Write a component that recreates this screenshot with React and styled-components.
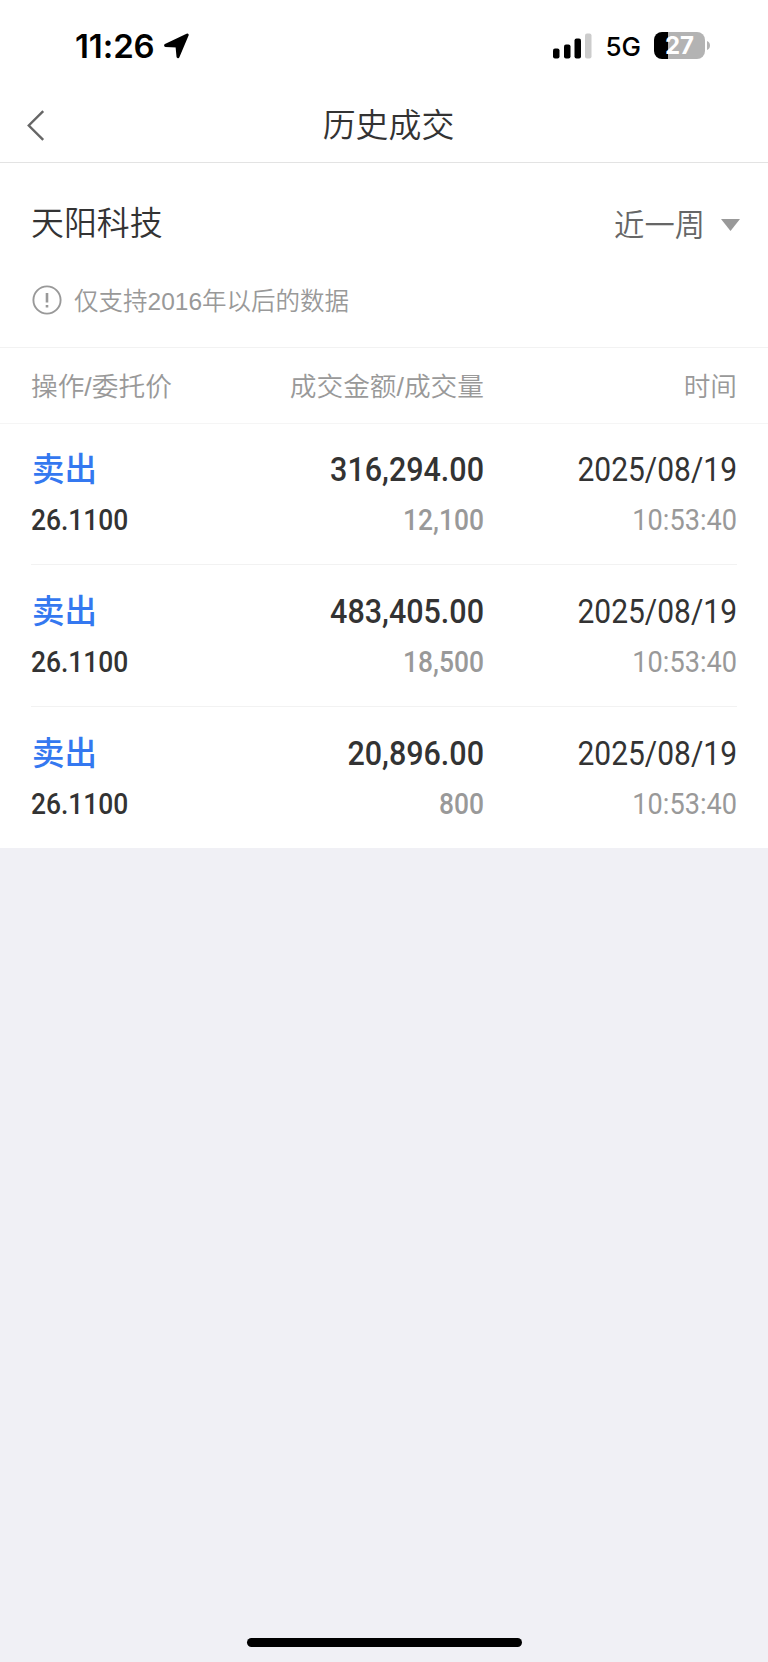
import styled, { createGlobalStyle } from 'styled-components';

const GlobalStyle = createGlobalStyle`
  * {
    box-sizing: border-box;
  }
  body {
    margin: 0;
    background-color: #f0f0f5;
    font-family: 'Liberation Sans', 'Noto Sans CJK SC', sans-serif;
    font-weight: 350;
    color: #333;
  }
`;

const Page = styled.div`
  display: flex;
  flex-direction: column;
  width: 768px;
  height: 1662px;
  background-color: #f0f0f5;
`;

const StatusBar = styled.div`
  display: flex;
  justify-content: space-between;
  height: 92px;
  padding: 0 58px 0 75px;
  background-color: #fff;
  color: #000;
  font-family: Inter, sans-serif;
`;

const StatusLeft = styled.div`
  display: flex;
  align-items: center;
  height: 92px;
  gap: 9px;
  font-size: 33px;
  font-weight: 600;
  letter-spacing: -0.1px;
`;

const StatusRight = styled.div`
  display: flex;
  align-items: center;
  height: 92px;
  font-size: 26px;
  font-weight: 500;
  .svg__signal {
    margin-right: 13px;
    margin-bottom: 1px;
  }
`;

const Battery = styled.div`
  display: flex;
  align-items: center;
  margin-left: 13px;
  padding-bottom: 1px;
  .div__battery-body {
    width: 51px;
    height: 27px;
    border-radius: 8px;
    background: linear-gradient(to right, #000 14px, #b3b3b3 14px);
    color: #fff;
    font-size: 24px;
    font-weight: 700;
    line-height: 27px;
    text-align: center;
  }
  .svg__battery-cap {
    margin-left: 2px;
  }
`;

const NavBar = styled.header`
  display: grid;
  grid-template-columns: 60px 1fr 51px;
  align-items: center;
  height: 71px;
  padding: 0 26px 3px;
  border-bottom: 1px solid #e3e3e3;
  background-color: #fff;
  h1 {
    margin: 0;
    font-size: 32.9px;
    font-weight: 350;
    line-height: 40px;
    text-align: center;
  }
`;

const StockRow = styled.div`
  display: flex;
  justify-content: space-between;
  height: 122px;
  padding: 0 28px 0 31px;
  background-color: #fff;
  h2 {
    margin: 0;
    font-size: 32.9px;
    font-weight: 350;
    line-height: 122px;
  }
`;

const PeriodPicker = styled.div`
  display: flex;
  align-items: center;
  height: 124px;
  gap: 16px;
  color: #666;
  font-size: 30.3px;
  span {
    padding-bottom: 4px;
  }
`;

const Notice = styled.div`
  display: flex;
  align-items: center;
  height: 62px;
  padding: 0 0 32px 32px;
  gap: 12px;
  background-color: #fff;
  color: #999;
  font-size: 24.5px;
  line-height: 30px;
  span {
    padding-top: 3px;
  }
`;

const TableHead = styled.div`
  display: grid;
  grid-template-columns: 200px 253px 253px;
  align-items: center;
  height: 77px;
  padding: 0 31px 3px;
  border-top: 1px solid #f2f2f2;
  border-bottom: 1px solid #f5f5f5;
  background-color: #fff;
  color: #999;
  font-size: 26.7px;
  span + span {
    text-align: right;
  }
`;

const List = styled.ul`
  margin: 0;
  padding: 0 31px;
  list-style: none;
  background-color: #fff;
`;

const Row = styled.li`
  display: grid;
  grid-template-columns: 200px 253px 253px;
  grid-template-rows: 50px 50px;
  height: 142px;
  padding-top: 22px;
  border-bottom: 1px solid #f2f2f2;
  &:first-child {
    height: 141px;
    padding-top: 21px;
  }
  &:last-child {
    height: 141px;
    border-bottom: none;
  }
`;

const Side = styled.div`
  padding-left: 1px;
  color: #3478f0;
  font-size: 32.5px;
  font-weight: 500;
  line-height: 51px;
`;

// narrow figures, squeezed towards the edge they are aligned to
const Figure = styled.div`
  color: ${({ $muted }) => ($muted ? '#999' : '#333')};
  font-family: Roboto, sans-serif;
  font-size: ${({ $small }) => ($small ? '29.5px' : '33.5px')};
  font-weight: ${({ $bold }) => ($bold ? 500 : 450)};
  line-height: ${({ $small }) => ($small ? '51px' : '50px')};
  text-align: ${({ $left }) => ($left ? 'left' : 'right')};
  transform: scaleX(${({ $scale }) => $scale || 0.895});
  transform-origin: ${({ $left }) => ($left ? 'left' : 'right')};
  white-space: nowrap;
`;

const HomeIndicator = styled.div`
  width: 275px;
  height: 9px;
  margin: auto auto 15px;
  border-radius: 5px;
  background-color: #000;
`;

const trades = [
  { amount: '316,294.00', volume: '12,100' },
  { amount: '483,405.00', volume: '18,500' },
  { amount: '20,896.00', volume: '800' },
];

export default function App() {
  return (
    <Page>
      <GlobalStyle />
      <StatusBar>
        <StatusLeft>
          <span>11:26</span>
          <svg width="26" height="26" viewBox="0 0 26 26">
            <path
              d="M1.6 12.4 23.2 2 14 23.6 13 13Z"
              fill="#000"
              stroke="#000"
              strokeWidth="3"
              strokeLinejoin="round"
            />
          </svg>
        </StatusLeft>
        <StatusRight>
          <svg className="svg__signal" width="39" height="26">
            <rect x="0" y="15.5" width="6.5" height="10" rx="2" />
            <rect x="11" y="11.5" width="6.5" height="14" rx="2" />
            <rect x="21.5" y="5.5" width="6.5" height="20" rx="2" />
            <rect x="32" y="0.5" width="6.5" height="25" rx="2" fill="#ccc" />
          </svg>
          <span>5G</span>
          <Battery>
            <div className="div__battery-body">27</div>
            <svg className="svg__battery-cap" width="3" height="9">
              <path d="M0 0C4 1.5 4 7.5 0 9Z" fill="#b3b3b3" />
            </svg>
          </Battery>
        </StatusRight>
      </StatusBar>
      <NavBar>
        <svg width="20" height="32" viewBox="0 0 20 32">
          <path
            d="M17.2 1.2 2.8 15.5 17.2 29.8"
            fill="none"
            stroke="#666"
            strokeWidth="2.4"
          />
        </svg>
        <h1>历史成交</h1>
      </NavBar>
      <StockRow>
        <h2>天阳科技</h2>
        <PeriodPicker>
          <span>近一周</span>
          <svg width="19" height="12">
            <path d="M0 0H19L9.5 12Z" fill="#999" />
          </svg>
        </PeriodPicker>
      </StockRow>
      <Notice>
        <svg width="30" height="30" viewBox="0 0 30 30">
          <circle cx="15" cy="15" r="13.6" fill="none" stroke="#999" strokeWidth="1.9" />
          <path d="M15 8V17.5M15 20V22.5" stroke="#999" strokeWidth="2.6" />
        </svg>
        <span>仅支持2016年以后的数据</span>
      </Notice>
      <TableHead>
        <span>操作/委托价</span>
        <span>成交金额/成交量</span>
        <span>时间</span>
      </TableHead>
      <List>
        {trades.map(({ amount, volume }) => (
          <Row key={amount}>
            <Side>卖出</Side>
            <Figure $bold $scale={0.91}>{amount}</Figure>
            <Figure>2025/08/19</Figure>
            <Figure $small $bold $left>26.1100</Figure>
            <Figure $small $bold $muted>{volume}</Figure>
            <Figure $small $muted $scale={0.92}>10:53:40</Figure>
          </Row>
        ))}
      </List>
      <HomeIndicator />
    </Page>
  );
}
